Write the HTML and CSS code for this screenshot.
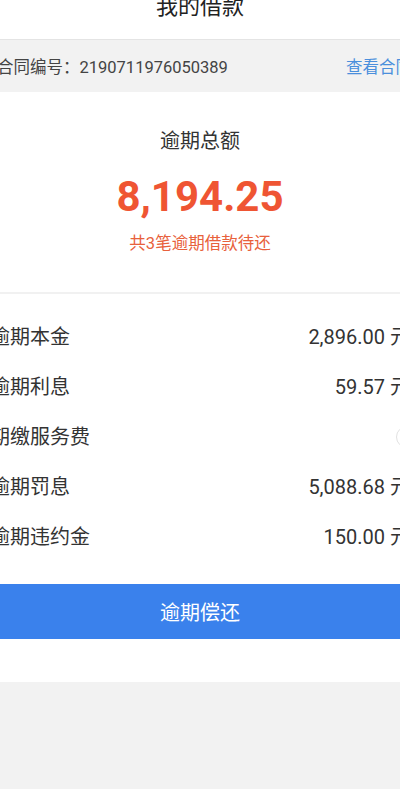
FILE: index.html
```html
<!DOCTYPE html>
<html lang="zh-CN">
<head>
    <meta charset="UTF-8">
    <meta name="viewport" content="width=device-width, initial-scale=1.0">
    <title>我的借款</title>
    <link rel="stylesheet" href="styles.css">
</head>
<body>
    <div class="page">
        <header class="nav">
            <h1>我的借款</h1>
        </header>

        <div class="contract">
            <span class="contract-no">合同编号：2190711976050389</span>
            <a class="contract-link" href="#">查看合同</a>
        </div>

        <section class="summary">
            <div class="summary-title">逾期总额</div>
            <div class="summary-amount">8,194.25</div>
            <div class="summary-note">共3笔逾期借款待还</div>
        </section>

        <section class="details">
            <div class="row">
                <span class="label">逾期本金</span>
                <span class="value">2,896.00 元</span>
            </div>
            <div class="row">
                <span class="label">逾期利息</span>
                <span class="value">59.57 元</span>
            </div>
            <div class="row">
                <span class="label">期缴服务费</span>
                <span class="value"><i class="help-icon">?</i></span>
            </div>
            <div class="row">
                <span class="label">逾期罚息</span>
                <span class="value">5,088.68 元</span>
            </div>
            <div class="row">
                <span class="label">逾期违约金</span>
                <span class="value">150.00 元</span>
            </div>

            <button class="repay-button">逾期偿还</button>
        </section>
    </div>
</body>
</html>
```

FILE: styles.css
```css
html, body {
    margin: 0;
    padding: 0;
    overflow: hidden;
}

body {
    font-family: Roboto, "Noto Sans CJK SC", sans-serif;
    background-color: #f2f2f2;
    color: #333;
    height: 789px;
}

.page {
    width: 440px;
    margin-left: -20px;
    margin-top: -25px;
}

.nav {
    height: 64px;
    background-color: #fff;
    border-bottom: 1px solid #e4e4e4;
    text-align: center;
}

.nav h1 {
    margin: 0;
    font-size: 22px;
    font-weight: normal;
    line-height: 64px;
    color: #222;
}

.contract {
    height: 52px;
    display: flex;
    justify-content: space-between;
    align-items: center;
    padding: 0 8px 0 17px;
    background-color: #f2f2f2;
    font-size: 16.5px;
}

.contract-no {
    color: #444;
}

.contract-link {
    color: #4a8fdc;
    text-decoration: none;
}

.summary {
    background-color: #fff;
    text-align: center;
    padding-top: 37px;
    height: 163px;
    border-bottom: 2px solid #f1f1f1;
}

.summary-title {
    font-size: 20px;
    line-height: 24px;
    color: #333;
}

.summary-amount {
    margin-top: 19px;
    font-size: 42px;
    font-weight: bold;
    line-height: 50px;
    color: #ef5533;
}

.summary-note {
    margin-top: 12px;
    font-size: 16.5px;
    line-height: 20px;
    color: #e8613c;
}

.details {
    background-color: #fff;
    padding: 16px 0 43px;
}

.row {
    height: 50px;
    display: flex;
    justify-content: space-between;
    align-items: center;
    padding: 0 10px;
    font-size: 20px;
}

.label {
    color: #333;
}

.value {
    color: #333;
}

.help-icon {
    display: inline-block;
    width: 20px;
    height: 20px;
    margin-right: -8px;
    border: 1px solid #e2e2e2;
    border-radius: 50%;
    font-size: 13px;
    font-style: normal;
    line-height: 20px;
    text-align: center;
    color: #ccc;
}

.repay-button {
    display: block;
    width: 100%;
    height: 55px;
    margin-top: 24px;
    border: none;
    background-color: #3a81ec;
    color: #fff;
    font-family: inherit;
    font-size: 20px;
}
```
